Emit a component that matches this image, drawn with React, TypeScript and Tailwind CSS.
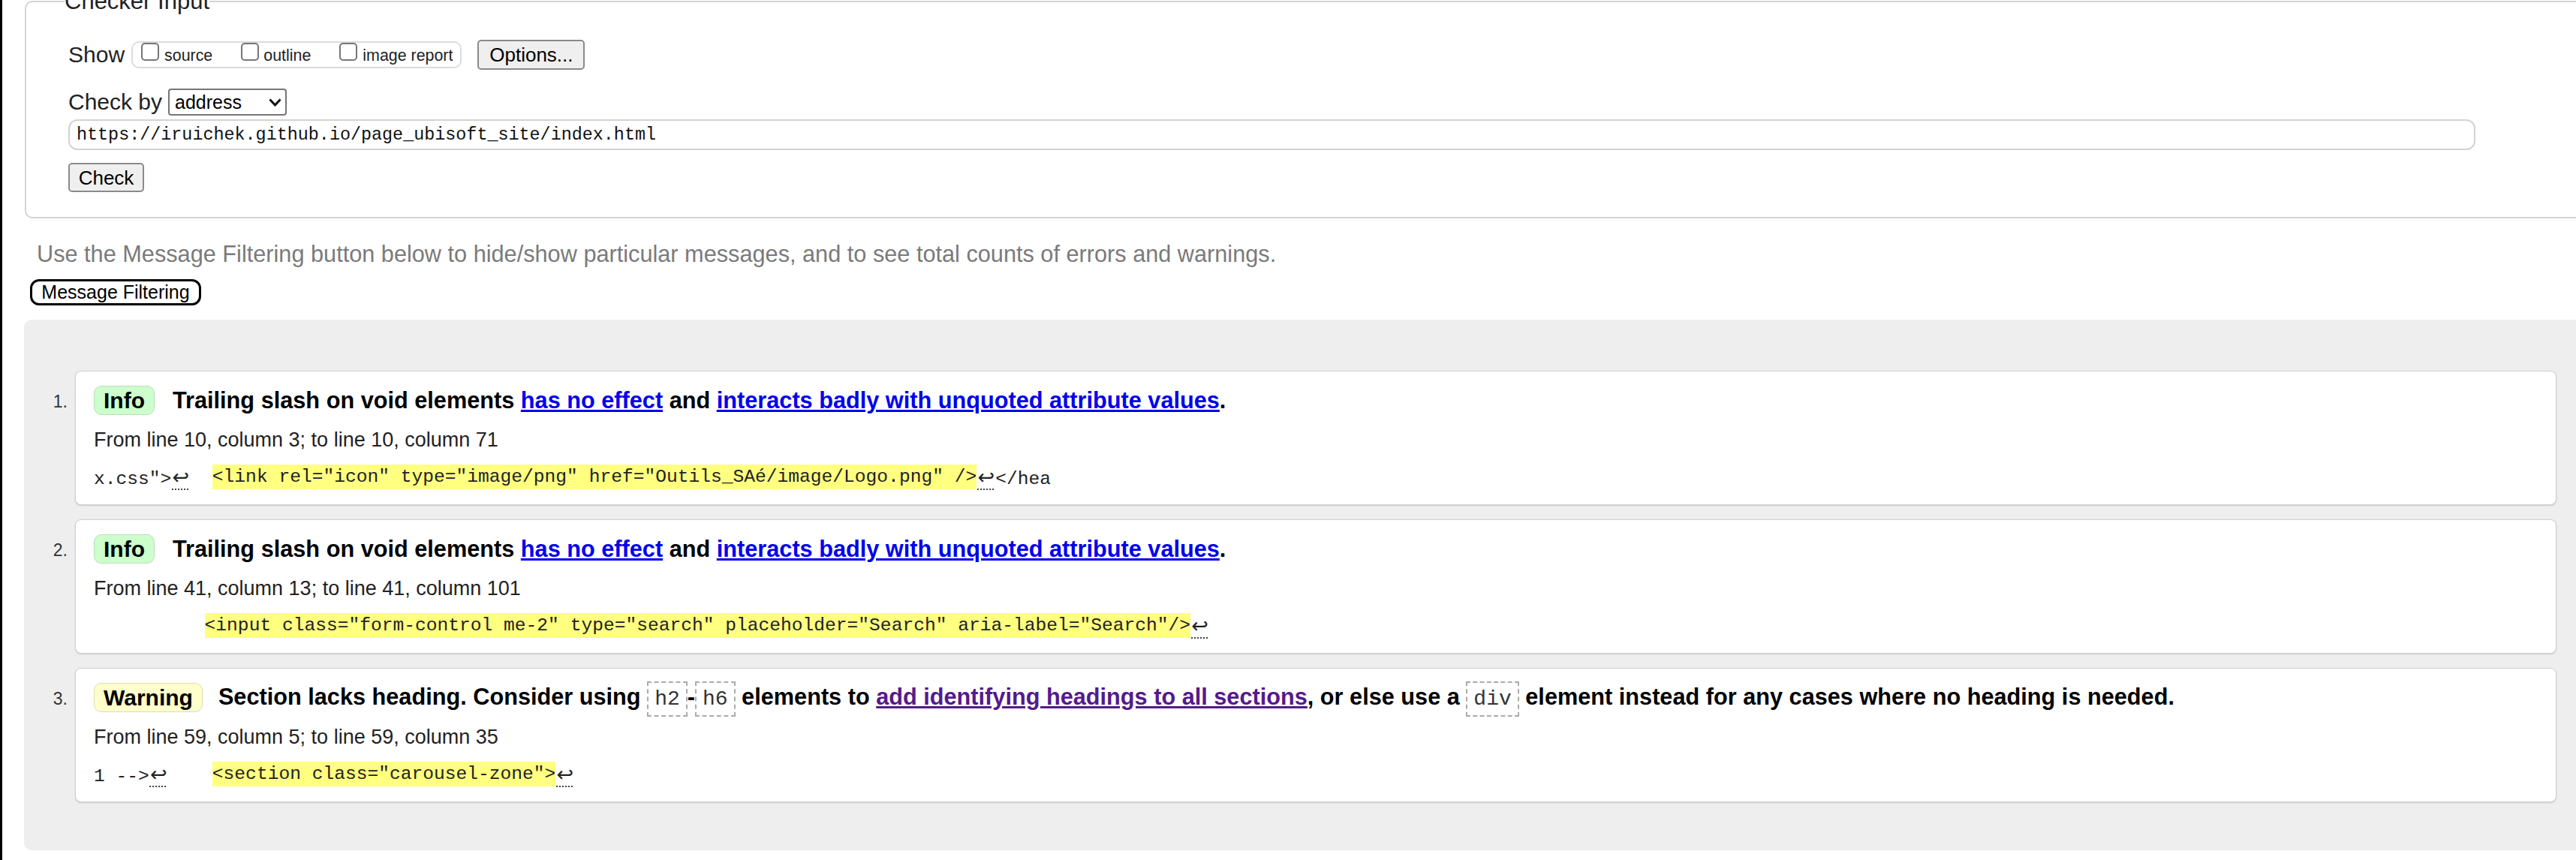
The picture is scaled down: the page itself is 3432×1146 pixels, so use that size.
import React from "react";

const MONO = "font-['Liberation_Mono','DejaVu_Sans_Mono',monospace]";

function Checkbox() {
  return <span className="block w-[24px] h-[24px] border-2 border-[#767676] rounded-[5px] bg-white shrink-0" />;
}

function Lf() {
  return (
    <span className="inline-block w-[25px] text-center font-['DejaVu_Sans',sans-serif] text-[27px] underline decoration-dotted decoration-2 underline-offset-[6px] decoration-[#444]">
      ↩
    </span>
  );
}

function Mark({ children }: { children: React.ReactNode }) {
  return <span className="inline-block align-top bg-[#ffff80] h-[33px]">{children}</span>;
}

function Code({ children }: { children: React.ReactNode }) {
  return (
    <span className={`${MONO} font-normal text-[28px] text-[#333] border-2 border-dashed border-[#aaaaaa] px-[8px] py-[6px]`}>
      {children}
    </span>
  );
}

function Item({
  n,
  badge,
  kind,
  message,
  location,
  extract,
}: {
  n: string;
  badge: string;
  kind: "info" | "warning";
  message: React.ReactNode;
  location: string;
  extract: React.ReactNode;
}) {
  const badgeCls =
    kind === "info"
      ? "bg-[#ccffcc] border-[#bcdcbc]"
      : "bg-[#ffffcc] border-[#dcdcb0]";
  return (
    <div className="flex">
      <div className="w-[68px] shrink-0 pr-[10px] text-right text-[23px] leading-[39px] mt-[22px] text-[#333]">{n}</div>
      <div className="flex-1 bg-white border border-[#cfcfcf] rounded-[8px] shadow-[0_1px_2px_rgba(0,0,0,0.15)] pl-[24px] pt-[19px] pb-[20px]">
        <div className="flex items-center h-[39px]">
          <div className={`h-[39px] px-[12px] flex items-center border ${badgeCls} rounded-[10px] font-bold text-[30px] leading-[34px] text-black`}>
            {badge}
          </div>
          <div className={`${kind === "info" ? "ml-[24px]" : "ml-[21px]"} font-bold text-[30.7px] leading-[35px] text-black whitespace-nowrap`}>{message}</div>
        </div>
        <div className="mt-[15px] text-[27px] leading-[36px] text-[#222]">{location}</div>
        <div className={`mt-[15px] leading-[33px] h-[33px] whitespace-pre ${MONO} text-[24.6px] text-[#222]`}>{extract}</div>
      </div>
    </div>
  );
}

export default function App() {
  const blue = "text-[#0000ee] underline";
  const purple = "text-[#551a8b] underline";
  return (
    <div className="w-[3432px] h-[1146px] overflow-hidden bg-white border-l-[3px] border-black font-['Liberation_Sans',Arial,sans-serif] text-[#222]">
      <fieldset className="-mt-[16px] ml-[30px] mr-[-40px] border-2 border-[#d4d4d4] rounded-[10px] pl-[56px] pb-[33px]">
        <legend className="-ml-[5px] text-[31px] leading-[36px] text-[#222]">Checker Input</legend>
        <div className="mt-[33px] h-[40px] flex items-center">
          <span className="text-[30px] leading-[36px]">Show</span>
          <div className="ml-[9px] h-[36px] flex items-start border-2 border-[#dcdcdc] rounded-[10px] pl-[11px] pr-[10px]">
            <Checkbox />
            <span className="ml-[7px] mt-[5px] text-[21.4px] leading-[24px]">source</span>
            <span className="ml-[38px]">
              <Checkbox />
            </span>
            <span className="ml-[6px] mt-[5px] text-[21.4px] leading-[24px]">outline</span>
            <span className="ml-[38px]">
              <Checkbox />
            </span>
            <span className="ml-[7px] mt-[5px] text-[21.4px] leading-[24px]">image report</span>
          </div>
          <div className="ml-[21px] w-[143px] h-[40px] flex items-center justify-center bg-[#efefef] border-2 border-[#8a8a8a] rounded-[5px] text-[26px] leading-[30px] text-black">
            Options...
          </div>
        </div>
        <div className="mt-[25px] h-[36px] flex items-center">
          <span className="text-[30px] leading-[36px]">Check by</span>
          <div className="ml-[8px] w-[158px] h-[36px] flex items-center justify-between border-2 border-[#767676] rounded-[4px] bg-white pl-[7px] pr-[5px]">
            <span className="text-[25px] leading-[30px] text-black">address</span>
            <svg width="17" height="11" viewBox="0 0 17 11">
              <polyline points="1.5,1.5 8.5,9 15.5,1.5" fill="none" stroke="#111" strokeWidth="3" strokeLinejoin="miter" />
            </svg>
          </div>
        </div>
        <div className={`mt-[5px] w-[3207px] h-[41px] flex items-center border-2 border-[#d3d3d3] rounded-[12px] pl-[9px] ${MONO} text-[23.4px] leading-[28px] text-[#111]`}>
          https://iruichek.github.io/page_ubisoft_site/index.html
        </div>
        <div className="mt-[17px] w-[101px] h-[39px] flex items-center justify-center bg-[#efefef] border-2 border-[#8a8a8a] rounded-[5px] text-[26px] leading-[30px] text-black">
          Check
        </div>
      </fieldset>

      <p className="mt-[30px] ml-[46px] text-[30.7px] leading-[35px] text-[#7a7a7a] whitespace-nowrap">
        Use the Message Filtering button below to hide/show particular messages, and to see total counts of errors and warnings.
      </p>
      <div className="mt-[16px] ml-[37px] w-[228px] h-[35px] flex items-center justify-center bg-white border-[3px] border-black rounded-[12px] text-[25px] leading-[29px] text-black">
        Message Filtering
      </div>

      <div className="mt-[19px] ml-[29px] mr-[-40px] bg-[#eeeeee] rounded-[10px] pt-[68px] pb-[64px] pr-[66px] flex flex-col gap-[19px]">
        <Item
          n="1."
          badge="Info"
          kind="info"
          message={
            <>
              Trailing slash on void elements <span className={blue}>has no effect</span> and{" "}
              <span className={blue}>interacts badly with unquoted attribute values</span>.
            </>
          }
          location="From line 10, column 3; to line 10, column 71"
          extract={
            <>
              {'x.css">'}
              <Lf />
              {"  "}
              <Mark>{'<link rel="icon" type="image/png" href="Outils_SAé/image/Logo.png" />'}</Mark>
              <Lf />
              {"</hea"}
            </>
          }
        />
        <Item
          n="2."
          badge="Info"
          kind="info"
          message={
            <>
              Trailing slash on void elements <span className={blue}>has no effect</span> and{" "}
              <span className={blue}>interacts badly with unquoted attribute values</span>.
            </>
          }
          location="From line 41, column 13; to line 41, column 101"
          extract={
            <>
              {"          "}
              <Mark>{'<input class="form-control me-2" type="search" placeholder="Search" aria-label="Search"/>'}</Mark>
              <Lf />
            </>
          }
        />
        <Item
          n="3."
          badge="Warning"
          kind="warning"
          message={
            <>
              Section lacks heading. Consider using <Code>h2</Code>-<Code>h6</Code> elements to{" "}
              <span className={purple}>add identifying headings to all sections</span>, or else use a <Code>div</Code> element
              instead for any cases where no heading is needed.
            </>
          }
          location="From line 59, column 5; to line 59, column 35"
          extract={
            <>
              {"1 -->"}
              <Lf />
              {"    "}
              <Mark>{'<section class="carousel-zone">'}</Mark>
              <Lf />
            </>
          }
        />
      </div>
    </div>
  );
}
